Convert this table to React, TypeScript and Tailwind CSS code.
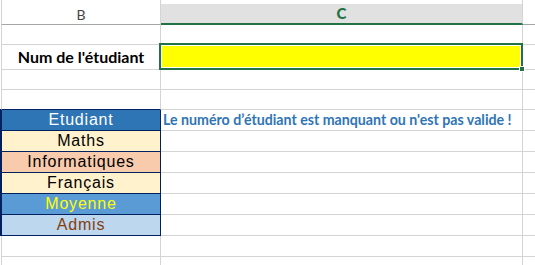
import { JSX, ReactNode } from 'react';

const GRID = 'border-[#d4d4d4]';
const NAVY = 'border-[#002060]';

type Item = {
  label: string;
  bg: string;
  text: string;
};

// left table: one row per subject line
const items: Item[] = [
  { label: 'Etudiant', bg: 'bg-[#2e75b6]', text: 'text-white' },
  { label: 'Maths', bg: 'bg-[#fff2cc]', text: 'text-black' },
  { label: 'Informatiques', bg: 'bg-[#f8cbad]', text: 'text-black' },
  { label: 'Français', bg: 'bg-[#fff2cc]', text: 'text-black' },
  { label: 'Moyenne', bg: 'bg-[#5b9bd5]', text: 'text-[#ffff00]' },
  { label: 'Admis', bg: 'bg-[#bdd7ee]', text: 'text-[#843c0c]' },
];

function Row({
  h,
  lead = 'bg-white',
  b,
  c,
  d,
}: {
  h: string;
  lead?: string;
  b: ReactNode;
  c: ReactNode;
  d?: ReactNode;
}): JSX.Element {
  return (
    <div className={`flex ${h}`}>
      <div className={`w-px shrink-0 ${lead}`} />
      {b}
      {c}
      {d ?? <div className={`flex-1 border-b ${GRID}`} />}
    </div>
  );
}

export default function App(): JSX.Element {
  return (
    <div className="w-[535px] h-[265px] overflow-hidden bg-white font-['Lato','Liberation_Sans',sans-serif]">
      {/* strip above the column headers */}
      <Row
        h="h-[4px]"
        b={<div className={`w-[160px] shrink-0 border-l border-r ${GRID}`} />}
        c={<div className={`w-[362px] shrink-0 border-r ${GRID}`} />}
        d={<div className="flex-1" />}
      />

      {/* column headers */}
      <Row
        h="h-[21px]"
        b={
          <div className="w-[160px] shrink-0 border-l border-r border-b border-l-[#d4d4d4] border-r-[#d4d4d4] border-b-[#a6a6a6] flex items-center justify-center text-[14px] text-[#444]">
            B
          </div>
        }
        c={
          <div className={`w-[362px] shrink-0 border-r ${GRID} border-b-2 border-b-[#217346] bg-[#e1e1e1] flex items-center justify-center text-[15px] font-black text-[#217346]`}>
            C
          </div>
        }
        d={<div className="flex-1 border-b border-[#a6a6a6]" />}
      />

      <Row
        h="h-[20px]"
        b={<div className={`w-[160px] shrink-0 border-l border-r border-b ${GRID}`} />}
        c={<div className={`w-[362px] shrink-0 border-r border-b ${GRID}`} />}
      />

      {/* student number input */}
      <Row
        h="h-[25px]"
        b={
          <div className={`w-[160px] shrink-0 border-l border-r border-b ${GRID} flex items-center justify-center text-[16px] font-bold text-black`}>
            Num de l'étudiant
          </div>
        }
        c={
          <div className={`relative w-[362px] shrink-0 border-r border-b ${GRID} bg-[#ffff00]`}>
            <div className="absolute -left-[2px] -top-[2px] -right-px -bottom-px border-2 border-[#217346] shadow-[inset_0_0_0_1px_white]" />
            <div className="absolute -right-[3px] -bottom-[3px] w-[6px] h-[6px] bg-[#217346] border border-white" />
          </div>
        }
      />

      <Row
        h="h-[20px]"
        b={<div className={`w-[160px] shrink-0 border-l border-r border-b ${GRID}`} />}
        c={<div className={`w-[362px] shrink-0 border-r border-b ${GRID}`} />}
      />
      <Row
        h="h-[20px]"
        lead="border-b border-[#002060]"
        b={<div className={`w-[160px] shrink-0 border-l border-r border-b ${GRID} border-b-[#002060]`} />}
        c={<div className={`w-[362px] shrink-0 border-r border-b ${GRID}`} />}
      />

      {items.map((it, i) => (
        <Row
          key={it.label}
          h="h-[21px]"
          lead="bg-[#002060]"
          b={
            <div
              className={`w-[160px] shrink-0 border-l border-r border-b ${NAVY} ${it.bg} ${it.text} flex items-center justify-center font-['Liberation_Sans',Arial,sans-serif] text-[16px] tracking-[0.8px] leading-none`}
            >
              {it.label}
            </div>
          }
          c={
            <div
              className={`w-[362px] shrink-0 border-r border-b ${GRID} flex items-center pl-[2px] text-[14.2px] font-bold text-[#2f75b5] whitespace-nowrap`}
            >
              {i === 0 ? "Le numéro d’étudiant est manquant ou n'est pas valide !" : ''}
            </div>
          }
        />
      ))}

      <Row
        h="h-[21px]"
        b={<div className={`w-[160px] shrink-0 border-l border-r border-b ${GRID}`} />}
        c={<div className={`w-[362px] shrink-0 border-r border-b ${GRID}`} />}
      />
      <Row
        h="h-[21px]"
        b={<div className={`w-[160px] shrink-0 border-l border-r ${GRID}`} />}
        c={<div className={`w-[362px] shrink-0 border-r ${GRID}`} />}
        d={<div className="flex-1" />}
      />
    </div>
  );
}
